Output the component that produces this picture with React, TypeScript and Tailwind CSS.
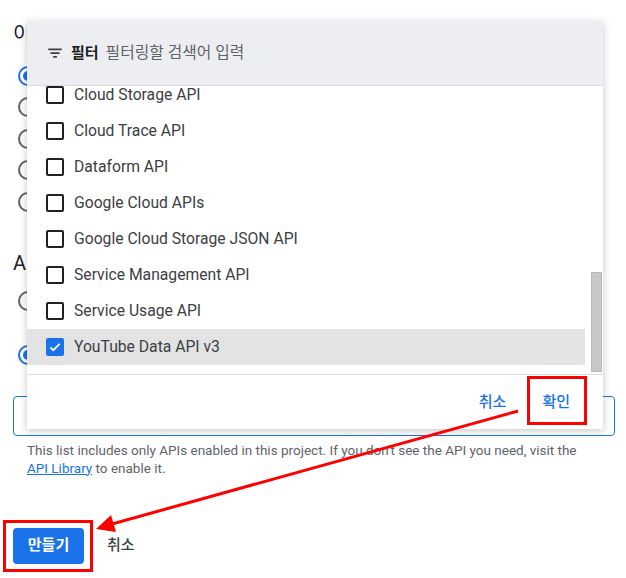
import React from 'react';

const apis = [
  { name: 'Cloud Storage API', checked: false },
  { name: 'Cloud Trace API', checked: false },
  { name: 'Dataform API', checked: false },
  { name: 'Google Cloud APIs', checked: false },
  { name: 'Google Cloud Storage JSON API', checked: false },
  { name: 'Service Management API', checked: false },
  { name: 'Service Usage API', checked: false },
  { name: 'YouTube Data API v3', checked: true },
];

const font = { fontFamily: 'Roboto, "Noto Sans CJK KR", sans-serif' };

function Radio({ on }: { on?: boolean }) {
  return (
    <div
      className={`w-[20px] h-[20px] rounded-full border-2 flex items-center justify-center ${
        on ? 'border-[#1a73e8]' : 'border-[#5f6368]'
      }`}
    >
      {on && <div className="w-[10px] h-[10px] rounded-full bg-[#1a73e8]" />}
    </div>
  );
}

function FilterPanel() {
  return (
    <div className="absolute left-[27px] top-[21px] w-[576px] h-[408px] bg-white flex flex-col shadow-[0_2px_8px_rgba(0,0,0,0.22)]">
      {/* 필터 헤더 */}
      <div className="h-[65px] bg-[#eceef1] border-b border-[#dadce0] flex items-center pl-[19px] gap-[7px]">
        <svg width="18" height="18" viewBox="0 0 24 24" className="text-[#3c4043]">
          <path d="M3 6h18v2.4H3zM6 11h12v2.4H6zM9.5 16h5v2.4h-5z" fill="currentColor" />
        </svg>
        <span className="text-[15px] font-bold text-[#202124]">필터</span>
        <span className="text-[15.8px] text-[#5f6368]">필터링할 검색어 입력</span>
      </div>

      {/* 목록 */}
      <div className="h-[288px] flex overflow-hidden">
        <div className="w-[558px] flex flex-col mt-[-9px]">
          {apis.map((api) => (
            <div
              key={api.name}
              className={`h-[36px] shrink-0 flex items-center pl-[19px] gap-[10px] ${
                api.checked ? 'bg-[#e3e3e3]' : ''
              }`}
            >
              {api.checked ? (
                <div className="w-[18px] h-[18px] rounded-[2px] bg-[#1a73e8] flex items-center justify-center">
                  <svg width="14" height="14" viewBox="0 0 24 24">
                    <path d="M4 12.5l5 5L20 6.5" stroke="white" strokeWidth="3" fill="none" />
                  </svg>
                </div>
              ) : (
                <div className="w-[18px] h-[18px] rounded-[2px] border-2 border-[#202124]" />
              )}
              <span className="text-[15.7px] text-[#3c4043]">{api.name}</span>
            </div>
          ))}
        </div>
        <div className="flex-1 pl-[6px]">
          <div className="mt-[186px] w-[11px] h-[100px] bg-[#c8c8c8] border border-[#b8b8b8]" />
        </div>
      </div>

      {/* 하단 버튼 */}
      <div className="flex-1 border-t border-[#dadce0] flex items-center justify-end pr-[33px] gap-[36px]">
        <span className="text-[15px] font-medium text-[#1a73e8]">취소</span>
        <span className="text-[15px] font-medium text-[#1a73e8]">확인</span>
      </div>
    </div>
  );
}

export default function App() {
  return (
    <div className="relative w-[626px] h-[578px] bg-white overflow-hidden" style={font}>
      <div className="pl-[13px] pr-[11px] pt-[22px]">
        <div className="h-[24px] text-[20px] leading-[24px] text-[#202124]">이 키 제한</div>

        <div className="mt-[14px] flex flex-col pl-[5px]">
          {[true, false, false, false, false].map((on, i) => (
            <div key={i} className="h-[31.5px] flex items-center">
              <Radio on={on} />
            </div>
          ))}
        </div>

        <div className="mt-[33px] h-[24px] text-[20px] leading-[24px] text-[#202124]">API 제한사항</div>

        <div className="mt-[10px] flex flex-col pl-[5px]">
          <div className="h-[32px] flex items-center">
            <Radio />
          </div>
          <div className="mt-[16px] h-[44px] flex items-center">
            <Radio on />
          </div>
        </div>

        <div className="mt-[19px] h-[40px] rounded-[4px] border-[1.5px] border-[#1a73e8]" />

        <div className="mt-[5px] pl-[14px] text-[13.5px] leading-[18px] text-[#5f6368]">
          This list includes only APIs enabled in this project. If you don't see the API you need, visit the
          <br />
          <span className="text-[#1a73e8] underline">API Library</span> to enable it.
        </div>

        <div className="mt-[51px] flex items-center gap-[23px]">
          <div className="w-[71px] h-[36px] rounded-[4px] bg-[#1a73e8] text-white text-[15px] font-bold flex items-center justify-center">
            만들기
          </div>
          <span className="text-[15px] font-medium text-[#3c4043]">취소</span>
        </div>
      </div>

      <FilterPanel />

      {/* 주석: 빨간 박스와 화살표 */}
      <div className="absolute left-[527px] top-[376px] w-[60px] h-[49px] border-[3px] border-[#ff0000]" />
      <div className="absolute left-[3px] top-[520px] w-[90px] h-[52px] border-[3px] border-[#ff0000]" />
      <svg className="absolute left-0 top-0" width="626" height="578">
        <line x1="518" y1="411" x2="112" y2="524" stroke="#ff0000" strokeWidth="3" />
        <polygon points="96,529 111,515 116,532" fill="#ff0000" />
      </svg>
    </div>
  );
}
